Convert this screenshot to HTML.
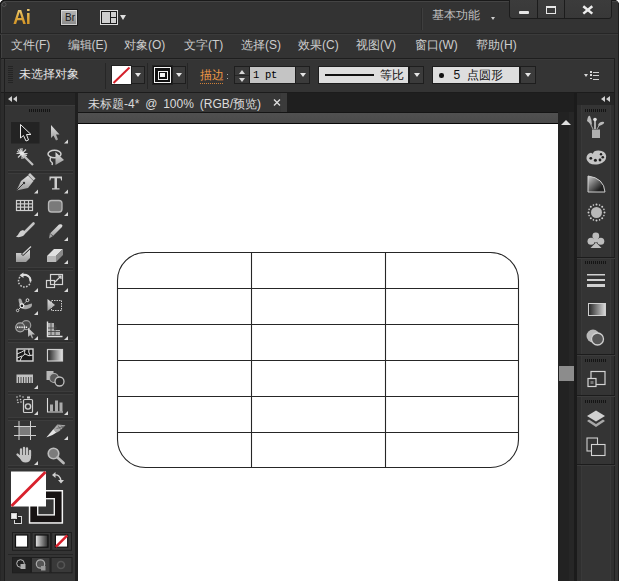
<!DOCTYPE html>
<html><head><meta charset="utf-8">
<style>
*{margin:0;padding:0;box-sizing:border-box}
html,body{width:619px;height:581px;overflow:hidden;background:#333333}
body{position:relative;font-family:"Liberation Sans",sans-serif;color:#cdcdcd}
.a{position:absolute}
.t{position:absolute;white-space:nowrap;font-size:12px;line-height:14px}
.dd{position:absolute;width:15px;height:18px;background:#3b3b3b;border:1px solid #1e1e1e}
.dd:after{content:"";position:absolute;left:calc(50% - 3px);top:6px;border-left:3px solid transparent;border-right:3px solid transparent;border-top:4px solid #e6e6e6}
.sep{position:absolute;width:1px;background:#262626}
.grip{position:absolute;height:3px;background:repeating-linear-gradient(90deg,#141414 0 1px,transparent 1px 2px)}
.tri{position:absolute;width:0;height:0;border-left:4px solid transparent;border-bottom:4px solid #d8d8d8}
</style></head><body>
<!-- ===== window frame / title bar ===== -->
<div class="a" style="left:0;top:0;width:619px;height:1px;background:#1a1a1a"></div><div class="a" style="left:0;top:1px;width:619px;height:1px;background:#444"></div><div class="a" style="left:0;top:0;width:1px;height:581px;background:#1e1e1e"></div><div class="a" style="left:1px;top:1px;width:1px;height:57px;background:#424242"></div><svg class="a" style="left:0;top:0" width="10" height="10"><path d="M0 0H3.2Q0.8 0.8 0 3.2Z" fill="#fff"/><path d="M0.5 4Q1 1 4 0.5" fill="none" stroke="#111" stroke-width="1.2"/><circle cx="4" cy="4.5" r="2" fill="none" stroke="#555" stroke-width="0.9"/></svg>
<div class="a" style="left:0;top:33px;width:619px;height:1px;background:#262626"></div><div class="a" style="left:0;top:34px;width:619px;height:1px;background:#3b3b3b"></div>

<!-- Ai logo -->
<div class="t" style="left:12.5px;top:6.5px;font-size:20.5px;line-height:20px;font-weight:bold;transform:scaleX(0.9);transform-origin:0 0;color:#e3b23e;background:linear-gradient(#f0d488 0,#e6b850 35%,#d69a2c 75%,#cc8e24 100%);-webkit-background-clip:text;background-clip:text;-webkit-text-fill-color:transparent;letter-spacing:-0.5px">Ai</div>
<!-- Br -->
<div class="a" style="left:61px;top:10px;width:16px;height:15px;border:1px solid #cfcfcf;border-top-color:#e0e0e0;background:linear-gradient(#b4b4b4,#8c8c8c);box-shadow:0 0 0 1px #1e1e1e"></div>
<div class="t" style="left:65px;top:13px;font-size:10px;line-height:10px;color:#1a1a1a">Br</div>
<!-- arrange icon -->
<div class="a" style="left:100px;top:10px;width:18px;height:15px;border:1px solid #dcdcdc;background:#1a1a1a"></div>
<div class="a" style="left:102px;top:12px;width:8px;height:11px;background:#cfcfcf"></div>
<div class="a" style="left:111px;top:12px;width:5px;height:5px;background:#cfcfcf"></div>
<div class="a" style="left:111px;top:18px;width:5px;height:5px;background:#cfcfcf"></div>
<div class="a" style="left:120px;top:15px;border-left:3.5px solid transparent;border-right:3.5px solid transparent;border-top:5px solid #e0e0e0"></div>
<!-- workspace -->
<div class="a" style="left:421px;top:8px;width:1px;height:22px;background:#2a2a2a"></div>
<div class="a" style="left:422px;top:8px;width:1px;height:22px;background:#3e3e3e"></div>
<div class="t" style="left:432px;top:8px;font-size:12px;color:#c0c0c0">基本功能</div>
<div class="a" style="left:491px;top:17px;border-left:2.5px solid transparent;border-right:2.5px solid transparent;border-top:3px solid #cfcfcf"></div>
<!-- window buttons -->
<div class="a" style="left:508.5px;top:-2px;width:103px;height:20.5px;border:1px solid #1c1c1c;border-radius:0 0 3px 3px;background:linear-gradient(#3c3c3c,#383838)"></div>
<div class="a" style="left:537px;top:0;width:1px;height:18px;background:#1c1c1c"></div>
<div class="a" style="left:564px;top:0;width:1px;height:18px;background:#1c1c1c"></div>
<div class="a" style="left:519px;top:11px;width:10px;height:2.6px;border-radius:1px;background:#e6e6e6"></div>
<div class="a" style="left:546px;top:6.3px;width:10px;height:7.5px;border:1.8px solid #e6e6e6;border-top-width:2.3px"></div>
<svg class="a" style="left:582px;top:5px" width="12" height="10"><path d="M1.3 1.2L10.3 8.6M10.3 1.2L1.3 8.6" stroke="#ececec" stroke-width="2.5"/></svg>

<div class="a" style="left:618px;top:0;width:1px;height:581px;background:#1e1e1e"></div>
<svg class="a" style="left:614px;top:0" width="5" height="5"><path d="M5 0H1.8Q4.2 0.8 5 3.2Z" fill="#fff"/></svg>
<!-- ===== menu bar ===== -->
<div class="t" style="left:11px;top:38px">文件(F)</div>
<div class="t" style="left:67.5px;top:38px">编辑(E)</div>
<div class="t" style="left:124px;top:38px">对象(O)</div>
<div class="t" style="left:184px;top:38px">文字(T)</div>
<div class="t" style="left:241px;top:38px">选择(S)</div>
<div class="t" style="left:298px;top:38px">效果(C)</div>
<div class="t" style="left:356px;top:38px">视图(V)</div>
<div class="t" style="left:414.5px;top:38px">窗口(W)</div>
<div class="t" style="left:476px;top:38px">帮助(H)</div>

<!-- ===== control bar ===== -->
<div class="a" style="left:2px;top:58px;width:612px;height:34px;background:#343434"></div><div class="a" style="left:0;top:57.5px;width:619px;height:1.5px;background:#1e1e1e"></div><div class="a" style="left:2px;top:59px;width:612px;height:1px;background:#3a3a3a"></div>
<div class="a" style="left:0;top:92px;width:619px;height:1px;background:#1c1c1c"></div>
<div class="a" style="left:8px;top:66px;width:5px;height:17px;background:repeating-linear-gradient(180deg,#242424 0 1px,transparent 1px 2px)"></div>
<div class="t" style="left:19px;top:67px;color:#e4e4e4">未选择对象</div>
<div class="sep" style="left:105px;top:63px;height:26px"></div>
<div class="a" style="left:112px;top:66px;width:19px;height:18px;background:#fff;box-shadow:0 0 0 1px #222"></div>
<svg class="a" style="left:112px;top:66px" width="19" height="18"><path d="M1.5 17L17.5 1.5" stroke="#d4202a" stroke-width="2"/></svg>
<div class="dd" style="left:131px;top:66px;width:14px"></div>
<div class="sep" style="left:147px;top:63px;height:26px"></div>
<div class="a" style="left:153px;top:66px;width:19px;height:18px;background:#111;box-shadow:0 0 0 1px #222"></div>
<div class="a" style="left:154px;top:67px;width:17px;height:16px;border:1.5px solid #f4f4f4"></div>
<div class="a" style="left:157.5px;top:70.5px;width:10px;height:9px;border:1.5px solid #f4f4f4"></div>
<div class="a" style="left:160px;top:73px;width:5px;height:4px;background:#f4f4f4"></div>
<div class="dd" style="left:172px;top:66px;width:14px"></div>
<div class="sep" style="left:187px;top:63px;height:26px"></div>
<div class="t" style="left:200px;top:67.5px;color:#f29a46">描边</div>
<div class="a" style="left:200px;top:82.5px;width:24px;height:1px;background:repeating-linear-gradient(90deg,#d08038 0 1px,transparent 1px 2px)"></div>
<div class="a" style="left:227px;top:74px;width:1px;height:1px;background:#aaa;box-shadow:0 4px 0 #aaa"></div>
<div class="a" style="left:234px;top:66px;width:16px;height:18px;background:#3a3a3a;border:1px solid #1e1e1e"></div>
<div class="a" style="left:235px;top:75px;width:14px;height:1px;background:#252525"></div>
<div class="a" style="left:238.5px;top:70px;border-left:3.5px solid transparent;border-right:3.5px solid transparent;border-bottom:4px solid #d8d8d8"></div>
<div class="a" style="left:238.5px;top:78px;border-left:3.5px solid transparent;border-right:3.5px solid transparent;border-top:4px solid #d8d8d8"></div>
<div class="a" style="left:249px;top:66px;width:47px;height:18px;background:#c4c4c4;border:1px solid #1e1e1e"></div>
<div class="t" style="left:253px;top:69px;font-family:'Liberation Mono',monospace;font-size:10.5px;line-height:12px;font-weight:normal;color:#000;letter-spacing:-0.3px">1 pt</div>
<div class="dd" style="left:295px;top:66px;width:15px"></div>
<div class="a" style="left:318px;top:66px;width:91px;height:18px;background:#dedede;border:1px solid #1e1e1e"></div>
<div class="a" style="left:325px;top:74px;width:49px;height:2px;background:#111"></div>
<div class="t" style="left:379.5px;top:68px;color:#111">等比</div>
<div class="dd" style="left:409px;top:66px;width:15px"></div>
<div class="a" style="left:432px;top:66px;width:88px;height:18px;background:#dedede;border:1px solid #1e1e1e"></div>
<div class="a" style="left:439px;top:73px;width:4.5px;height:4.5px;border-radius:50%;background:#111"></div>
<div class="t" style="left:453.5px;top:68px;color:#111;word-spacing:3px">5 点圆形</div>
<div class="dd" style="left:520px;top:66px;width:16px"></div>
<!-- panel menu icon -->
<div class="a" style="left:584px;top:73.5px;border-left:2.5px solid transparent;border-right:2.5px solid transparent;border-top:3px solid #d8d8d8"></div>
<div class="a" style="left:590px;top:71px;width:1.5px;height:9px;background:repeating-linear-gradient(180deg,#d8d8d8 0 1.5px,transparent 1.5px 3.3px)"></div>
<div class="a" style="left:592.5px;top:71.5px;width:6px;height:8px;background:repeating-linear-gradient(180deg,#cfcfcf 0 1px,transparent 1px 3.3px)"></div>
<!-- ===== left frame ===== -->
<div class="a" style="left:0;top:58px;width:1px;height:523px;background:#262626"></div>
<div class="a" style="left:1px;top:93px;width:3px;height:488px;background:#2c2c2c"></div><div class="a" style="left:4px;top:58px;width:1px;height:523px;background:#1e1e1e"></div>
<!-- ===== left toolbar ===== -->
<div class="a" style="left:5px;top:93px;width:70px;height:488px;background:#343434"></div>
<div class="a" style="left:5px;top:93px;width:70px;height:12px;background:#262626"></div>
<div class="a" style="left:5px;top:105px;width:70px;height:1px;background:#3c3c3c"></div>
<svg class="a" style="left:8px;top:96px" width="10" height="6"><path d="M4 0L0 3L4 6ZM9 0L5 3L9 6Z" fill="#cfcfcf"/></svg>
<div class="grip" style="left:29px;top:109px;width:21px"></div>
<div class="a" style="left:75px;top:93px;width:3px;height:488px;background:#1f1f1f"></div>

<!-- ===== document tab bar ===== -->
<div class="a" style="left:78px;top:93px;width:498px;height:19px;background:#1f1f1f"></div>
<div class="a" style="left:78px;top:93px;width:209px;height:19px;background:#373737"></div><div class="a" style="left:281px;top:93px;width:6px;height:19px;background:#3b3b3b"></div>
<div class="t" style="left:88px;top:97px;color:#dcdcdc;word-spacing:2.5px">未标题-4* @ 100% (RGB/预览)</div>
<svg class="a" style="left:273px;top:99px" width="8" height="7"><path d="M1 0.5L7 6.5M7 0.5L1 6.5" stroke="#dcdcdc" stroke-width="1.4"/></svg>
<div class="a" style="left:78px;top:112px;width:480px;height:11px;background:linear-gradient(#151515 0,#151515 1px,#505050 1px,#4a4a4a 100%)"></div>
<div class="a" style="left:78px;top:123px;width:480px;height:1px;background:#080808"></div>
<div class="a" style="left:78px;top:124px;width:480px;height:457px;background:#ffffff"></div>
<!-- scrollbar -->
<div class="a" style="left:558px;top:112px;width:18px;height:469px;background:#222"></div>
<div class="a" style="left:569px;top:112px;width:5px;height:469px;background:#262626"></div>
<div class="a" style="left:574px;top:93px;width:3px;height:488px;background:#1b1b1b"></div>
<div class="a" style="left:561px;top:119.5px;border-left:5.2px solid transparent;border-right:5.2px solid transparent;border-bottom:5.5px solid #e0e0e0"></div>
<div class="a" style="left:559px;top:366px;width:15px;height:15px;background:#8c8c8c"></div>

<!-- ===== right panel ===== -->
<div class="a" style="left:577px;top:93px;width:37px;height:488px;background:#2f2f2f"></div>
<div class="a" style="left:581px;top:105px;width:30px;height:476px;background:#393939"></div>
<div class="a" style="left:582px;top:105px;width:28px;height:476px;background:#343434"></div>
<div class="a" style="left:577px;top:93px;width:37px;height:12px;background:#262626"></div>
<div class="a" style="left:614px;top:58px;width:1px;height:523px;background:#1e1e1e"></div><div class="a" style="left:615px;top:58px;width:3px;height:523px;background:#333"></div>
<svg class="a" style="left:601px;top:96px" width="10" height="6"><path d="M4 0L0 3L4 6ZM9 0L5 3L9 6Z" fill="#cfcfcf"/></svg>
<div class="grip" style="left:585px;top:109px;width:21px"></div>
<div class="grip" style="left:585px;top:261px;width:21px"></div>
<div class="grip" style="left:585px;top:359px;width:21px"></div>
<div class="grip" style="left:585px;top:400px;width:21px"></div>

<!-- ===== tools ===== -->
<svg class="a" style="left:0;top:0" width="78" height="581">
<defs>
<linearGradient id="gg" x1="0" y1="0" x2="0" y2="1"><stop offset="0" stop-color="#e0e0e0"/><stop offset="1" stop-color="#9a9a9a"/></linearGradient>
<linearGradient id="gr" x1="0" y1="0" x2="1" y2="0"><stop offset="0" stop-color="#1e1e1e"/><stop offset="1" stop-color="#e8e8e8"/></linearGradient><linearGradient id="gw" x1="0" y1="0" x2="1" y2="0"><stop offset="0" stop-color="#e8e8e8"/><stop offset="1" stop-color="#2a2a2a"/></linearGradient>
</defs>
<!-- separators -->
<g fill="#3c3c3c">
<rect x="8" y="170" width="65" height="1"/><rect x="8" y="267" width="65" height="1"/>
<rect x="8" y="339" width="65" height="1"/><rect x="8" y="391" width="65" height="1"/>
<rect x="8" y="417" width="65" height="1"/><rect x="8" y="465" width="65" height="1"/>
<rect x="8" y="173" width="65" height="1"/><rect x="8" y="270" width="65" height="1"/>
<rect x="8" y="342" width="65" height="1"/><rect x="8" y="394" width="65" height="1"/>
<rect x="8" y="420" width="65" height="1"/><rect x="8" y="468" width="65" height="1"/>
</g>
<g fill="#262626">
<rect x="8" y="171.5" width="65" height="1"/><rect x="8" y="268.5" width="65" height="1"/>
<rect x="8" y="340.5" width="65" height="1"/><rect x="8" y="392.5" width="65" height="1"/>
<rect x="8" y="418.5" width="65" height="1"/><rect x="8" y="466.5" width="65" height="1"/>
<rect x="8" y="554" width="65" height="1"/>
</g>
<!-- corner triangles -->
<g fill="#d8d8d8">
<path d="M68 139.5V143.5H64Z"/>
<path d="M38 189.5V193.5H34Z"/><path d="M68 189.5V193.5H64Z"/>
<path d="M38 212V216H34Z"/><path d="M68 212V216H64Z"/>
<path d="M68 237V241H64Z"/>
<path d="M68 260V264H64Z"/>
<path d="M38 288V292H34Z"/><path d="M68 288V292H64Z"/>
<path d="M38 311V315H34Z"/>
<path d="M38 336V340H34Z"/><path d="M68 336V340H64Z"/>
<path d="M38 385V389H34Z"/>
<path d="M38 411V415H34Z"/><path d="M68 411V415H64Z"/>
<path d="M68 436V440H64Z"/>
<path d="M38 461V465H34Z"/>
</g>
<!-- row1: selection -->
<rect x="11" y="122" width="28.5" height="21.5" fill="#232323"/>
<path d="M20.5 124.5V138L23.5 135.5L26 141L28.5 140L26.5 134.5H31Z" fill="#1a1a1a" stroke="#e8e8e8" stroke-width="1"/>
<path d="M51 125V138L53.5 135.5L56 140.5L58 139.5L56 134.5H59.5Z" fill="url(#gg)"/>
<!-- row2: magic wand / lasso -->
<g stroke="#d0d0d0" stroke-width="1.1">
<path d="M22 148V159M16.5 153.5H27.5M18 149.5L26 157.5M26 149.5L18 157.5M20 148.5L24 158.5M17 151.5L27 155.5"/>
</g><circle cx="22" cy="153.5" r="2" fill="#e8e8e8"/>
<path d="M24 156L33 165" stroke="#c0c0c0" stroke-width="2.2"/>
<ellipse cx="54.5" cy="154" rx="6.5" ry="3.8" fill="none" stroke="#cfcfcf" stroke-width="1.5"/>
<path d="M51 157Q49 160 51.5 162Q53 163 52 165" fill="none" stroke="#cfcfcf" stroke-width="1.4"/>
<path d="M55.5 152V165L64 160Z" fill="url(#gg)"/>
<!-- row3: pen / type -->
<path d="M16.5 190.5L21 181L28 175.5L33.5 181L28 188Z" fill="url(#gg)"/>
<path d="M28 175L30 173L35.5 178.5L33.5 180.5Z" fill="#c8c8c8"/>
<path d="M16.5 190.5L23.5 183.5" stroke="#333" stroke-width="1"/>
<circle cx="24" cy="183" r="1.2" fill="#333"/>
<path d="M49.5 176.5H62V180.5H61.2L60.5 178.3H57V188.3H59.5V189.5H52V188.3H54.5V178.3H51L50.3 180.5H49.5Z" fill="#cdcdcd"/>
<!-- row4: grid / rounded rect -->
<g fill="none" stroke="#d0d0d0" stroke-width="1.2">
<rect x="16.5" y="200.5" width="16" height="10"/>
<path d="M16.5 203.8H32.5M16.5 207.2H32.5M20.5 200.5V210.5M24.5 200.5V210.5M28.5 200.5V210.5"/>
</g>
<rect x="48.5" y="200.5" width="13.5" height="11.5" rx="3" fill="#7a7a7a" stroke="#b8b8b8" stroke-width="1.3"/>
<!-- row5: brush / pencil -->
<path d="M24.5 232.5L33.5 223.5" stroke="#c4c4c4" stroke-width="2.6" stroke-linecap="round"/>
<path d="M16 236.8Q19.5 237.8 23 236Q25.8 234 25 231.5L23 230Q20 230.5 19 233Q18 235.5 16 236.8Z" fill="#cfcfcf"/>
<path d="M49 238.5L50 233.5L59 224.5Q61.5 223.5 62.5 225.5L62 227L53 236Z" fill="url(#gg)"/>
<path d="M50 233.5L53 236" stroke="#444" stroke-width="0.8"/>
<!-- row6: blob brush / eraser -->
<path d="M16 253H26L30 249V258L26 262H16Z" fill="url(#gg)"/>
<path d="M22 255L31 246.5" stroke="#2a2a2a" stroke-width="3"/>
<path d="M22.5 254.5L31 246.5" stroke="#cfcfcf" stroke-width="1.5"/>
<path d="M47 256L54 249H63L56 256Z" fill="#e0e0e0"/>
<path d="M47 256H56V262H47Z" fill="#b8b8b8"/><path d="M56 256L63 249V255L56 262Z" fill="#8a8a8a"/>
<!-- row7: rotate / scale -->
<circle cx="24.5" cy="281" r="6" fill="none" stroke="#c8c8c8" stroke-width="1.5" stroke-dasharray="1.6 1.4"/>
<path d="M22 275.3A6 6 0 0 1 30.5 281" fill="none" stroke="#dcdcdc" stroke-width="2"/>
<path d="M23.5 272.5V278L19.5 275.3Z" fill="#dcdcdc"/>
<g fill="none" stroke="#d4d4d4" stroke-width="1.2">
<rect x="50.5" y="274.5" width="12" height="10"/>
<rect x="46.5" y="280.5" width="8" height="7"/>
<path d="M55 282L61 276M58 276H61V279"/>
</g>
<!-- row8: width / free transform -->
<path d="M18.5 299Q21 297.5 22 301Q23 306 27 305Q30 303.5 32 303.5Q32.5 308 27 309Q21.5 310 20 306Q18.5 302 18.5 299Z" fill="#a8a8a8"/>
<path d="M17.6 310.5L27.5 300.2" stroke="#e8e8e8" stroke-width="1" stroke-dasharray="1.2 0.8"/>
<circle cx="21.9" cy="305.8" r="1.9" fill="#222" stroke="#f0f0f0" stroke-width="1.1"/>
<circle cx="27.5" cy="300.2" r="1.4" fill="#222" stroke="#e8e8e8" stroke-width="1"/>
<circle cx="17.6" cy="310.5" r="1.2" fill="#222" stroke="#e0e0e0" stroke-width="0.9"/>
<rect x="51.5" y="300.5" width="10" height="10" fill="none" stroke="#cfcfcf" stroke-width="1" stroke-dasharray="1.5 1"/>
<path d="M47.5 299V311L55 305Z" fill="url(#gg)"/>
<!-- row9: shape builder / perspective -->
<circle cx="26.2" cy="325.2" r="4.5" fill="#4a4a4a" stroke="#999" stroke-width="1.2"/>
<circle cx="20.2" cy="327.3" r="4.5" fill="#555" stroke="#aaa" stroke-width="1.2"/>
<path d="M17 327.3H28" stroke="#f4f4f4" stroke-width="1.4" stroke-dasharray="1.3 0.9"/>
<path d="M28 327.8V337L30.3 335L32 338.5L33.3 338L31.8 334.5H35Z" fill="url(#gg)"/>
<path d="M47.5 321.5V336.5H62.5" fill="none" stroke="#e0e0e0" stroke-width="1.4"/>
<path d="M48 323H54V330H60V335H48Z" fill="#b0b0b0"/>
<path d="M51 322V335M55 325V335M48 328H57M48 331.5H61" stroke="#4a4a4a" stroke-width="0.9"/>
<!-- row10: mesh / gradient -->
<rect x="17" y="349" width="16" height="12" fill="#1a1a1a" stroke="#d8d8d8" stroke-width="1.4"/>
<path d="M17 354Q22 352 25 350M20 361Q21 356 25 354Q29 357 33 355M25 350Q24 353 25 354M22 356L17 358M29 349Q28 352 30 355" fill="none" stroke="#e0e0e0" stroke-width="1"/>
<rect x="47.5" y="349.5" width="15" height="11.5" fill="url(#gr)" stroke="#cfcfcf" stroke-width="1.2"/>
<!-- row11: ruler / blend -->
<path d="M16.5 374.5H33V383H16.5Z" fill="#c0c0c0"/>
<path d="M18.5 377V383M21 377V383M23.5 377V383M26 377V383M28.5 377V383M31 377V383" stroke="#444" stroke-width="0.9"/>
<rect x="46.5" y="371" width="7" height="9" fill="#b8b8b8"/>
<circle cx="54" cy="378" r="4.5" fill="#5a5a5a" stroke="#b0b0b0" stroke-width="1.2"/>
<circle cx="59.5" cy="381.5" r="4.5" fill="#2c2c2c" stroke="#c0c0c0" stroke-width="1.3"/>
<!-- row12: symbol sprayer / graph -->
<g fill="#cfcfcf"><circle cx="17" cy="397" r=".8"/><circle cx="20" cy="396" r=".8"/><circle cx="23" cy="397" r=".8"/><circle cx="17.5" cy="400" r=".8"/><circle cx="20.5" cy="399.5" r=".8"/><circle cx="18" cy="402.5" r=".8"/><circle cx="21" cy="402" r=".8"/></g>
<rect x="27" y="396.5" width="3" height="2" fill="#cfcfcf"/>
<rect x="23.5" y="399.5" width="9" height="13" rx="1" fill="#333" stroke="#cfcfcf" stroke-width="1.2"/>
<circle cx="28" cy="406.5" r="2.6" fill="none" stroke="#d0d0d0" stroke-width="1.4"/>
<path d="M47.5 398V412H63" fill="none" stroke="#dcdcdc" stroke-width="1.1"/>
<rect x="50" y="404.5" width="3" height="7" fill="#aaa"/><rect x="55" y="400.5" width="3" height="11" fill="#aaa"/><rect x="59.5" y="402.5" width="3" height="9" fill="#aaa"/>
<!-- row13: artboard / slice -->
<rect x="19" y="426.5" width="11.5" height="9" fill="#7a7a7a"/>
<path d="M14 426.5H36M14 435.5H36M19 421V440M30.5 421V440" stroke="#d0d0d0" stroke-width="1"/>
<path d="M46.3 437.5L53.5 429L56.5 432.5L52.5 435Z" fill="#e4e4e4"/>
<path d="M53.3 429.2L57.3 424.5L65.5 425.3L59.5 431L56.5 432.7Z" fill="#a8a8a8"/>
<path d="M58 425.5L61 430M61 425.5L63 428M56.5 428.5L64 426.5" stroke="#555" stroke-width="0.7"/>
<!-- row14: hand / zoom -->
<g stroke="#c4c4c4" stroke-width="2.3" stroke-linecap="round"><path d="M21 456V449.5M24 455V448M27 455V448.5M30 456V451M17.5 454.5L21 458"/></g>
<path d="M20 455H31V458Q30 462.5 25.5 462.5Q21.5 462.5 20 458Z" fill="#c4c4c4"/>
<circle cx="53.5" cy="453.5" r="5.3" fill="#7c7c7c" stroke="#bdbdbd" stroke-width="1.6"/>
<path d="M57.5 457.5L63.5 463" stroke="#b8b8b8" stroke-width="2.8" stroke-linecap="round"/>
<!-- fill / stroke -->
<rect x="28.8" y="490" width="34.3" height="33.7" fill="#f4f4f4"/>
<rect x="30.3" y="491.5" width="31.3" height="30.7" fill="#171313"/>
<rect x="37" y="498" width="18" height="17.6" fill="#f0f0f0"/>
<rect x="38.4" y="499.4" width="15.2" height="14.8" fill="#363636"/>
<rect x="11" y="471.5" width="35" height="35" fill="#ffffff"/>
<path d="M11.5 506L45.5 472" stroke="#d8202c" stroke-width="2.8"/>
<path d="M54 475Q60 474 61 481" fill="none" stroke="#d0d0d0" stroke-width="1.4"/>
<path d="M55.5 472V478L52 475Z M58 480H64L61 483.5Z" fill="#d0d0d0"/>
<rect x="14.5" y="516.5" width="7" height="7" fill="#222" stroke="#d8d8d8" stroke-width="1"/>
<rect x="10.5" y="512.5" width="7" height="7" fill="#e8e8e8" stroke="#222" stroke-width="1"/>
<rect x="11.5" y="513.5" width="5" height="5" fill="#f0f0f0" stroke="#bbb" stroke-width=".6"/>
<!-- color buttons -->
<g fill="#393939" stroke="#1e1e1e" stroke-width="1"><rect x="12.5" y="532.5" width="18.4" height="17.8"/><rect x="32" y="532.5" width="18.6" height="17.8"/><rect x="51.7" y="532.5" width="19.7" height="17.8"/></g>
<rect x="15.5" y="535" width="12.2" height="12.2" fill="#fff" stroke="#111" stroke-width="1.2"/>
<rect x="35.2" y="535" width="12.8" height="12.2" fill="url(#gw)" stroke="#111" stroke-width="1.2"/>
<rect x="55.4" y="535" width="12.3" height="12.2" fill="#fff" stroke="#111" stroke-width="1.2"/>
<path d="M55.8 546.8L67.3 535.4" stroke="#d8202c" stroke-width="2.5"/>
<!-- draw modes -->
<g stroke="#1e1e1e" stroke-width="1">
<rect x="12.5" y="557.5" width="18" height="15.3" fill="#232323"/>
<rect x="31.5" y="557.5" width="18.5" height="15.3" fill="#3c3c3c"/>
<rect x="51" y="557.5" width="21" height="15.3" fill="#393939"/>
</g>
<circle cx="20.5" cy="563.5" r="3.8" fill="none" stroke="#bbb" stroke-width="1"/><rect x="20.5" y="564" width="5" height="5" fill="#b0b0b0"/>
<circle cx="40.5" cy="564" r="4.2" fill="#555" stroke="#aaa" stroke-width="1.2"/><rect x="41" y="566" width="4.5" height="4.5" fill="#999"/>
<circle cx="61" cy="565" r="3.5" fill="none" stroke="#555" stroke-width="1.6"/>
</svg>

<!-- ===== right panel icons ===== -->
<svg class="a" style="left:576px;top:93px" width="43" height="488">
<defs>
<linearGradient id="rg" x1="0" y1="0" x2="1" y2="0"><stop offset="0" stop-color="#252525"/><stop offset="1" stop-color="#dcdcdc"/></linearGradient>
<linearGradient id="rg2" x1="0" y1="0" x2="1" y2="1"><stop offset="0" stop-color="#d0d0d0"/><stop offset="0.75" stop-color="#202020"/></linearGradient>
</defs>
<!-- group separators (y offsets relative to 93) -->
<g fill="#1c1c1c"><rect x="1" y="164" width="38" height="1"/><rect x="1" y="261" width="38" height="1"/><rect x="1" y="302" width="38" height="1"/><rect x="1" y="371" width="38" height="1"/></g>
<g fill="#3c3c3c"><rect x="1" y="165" width="38" height="1"/><rect x="1" y="262" width="38" height="1"/><rect x="1" y="303" width="38" height="1"/><rect x="1" y="372" width="38" height="1"/></g>
<!-- brushes (y 117-138) -->
<path d="M13 28L17 36" stroke="#aaa" stroke-width="1"/>
<path d="M11 28Q12 22 14 23Q16 27 16 32Z" fill="#b8b8b8"/>
<path d="M19 26V36" stroke="#ddd" stroke-width="1.4"/><circle cx="19" cy="26.5" r="1.8" fill="#e0e0e0"/>
<path d="M21 36L24 31" stroke="#aaa" stroke-width="1"/>
<path d="M22 32Q24 28 28 29Q29 31 23 33Z" fill="#b8b8b8"/>
<rect x="16" y="36.5" width="8" height="8.5" fill="#b0b0b0"/>
<!-- palette (y 150-165) -->
<path d="M10.5 66Q10 61 15 59.8L16.8 60.8Q17.5 57.3 22.5 57.4Q29.5 57.8 30.2 63Q30.5 69.5 22.5 71.3Q12.5 72.8 10.5 66Z" fill="#c4c4c4"/>
<g fill="#1e1e1e"><circle cx="14.8" cy="65.3" r="1.4"/><circle cx="19.4" cy="67.2" r="1.5"/><circle cx="24" cy="67" r="1.4"/><circle cx="26.8" cy="64.2" r="1.3"/><circle cx="25" cy="61.3" r="1.2"/></g>
<!-- color guide quarter (y 176-192) -->
<path d="M12 83V99H29Q28 85 12 83Z" fill="url(#rg2)" stroke="#cfcfcf" stroke-width="1"/>
<!-- swatches sun (y 204-222) -->
<circle cx="20.5" cy="119.5" r="5.5" fill="#b8b8b8"/>
<g fill="#cfcfcf"><circle cx="20.5" cy="111.5" r="1"/><circle cx="26.2" cy="113.8" r="1"/><circle cx="28.5" cy="119.5" r="1"/><circle cx="26.2" cy="125.2" r="1"/><circle cx="20.5" cy="127.5" r="1"/><circle cx="14.8" cy="125.2" r="1"/><circle cx="12.5" cy="119.5" r="1"/><circle cx="14.8" cy="113.8" r="1"/><circle cx="23.6" cy="112.1" r=".8"/><circle cx="27.9" cy="116.4" r=".8"/><circle cx="27.9" cy="122.6" r=".8"/><circle cx="23.6" cy="126.9" r=".8"/><circle cx="17.4" cy="126.9" r=".8"/><circle cx="13.1" cy="122.6" r=".8"/><circle cx="13.1" cy="116.4" r=".8"/><circle cx="17.4" cy="112.1" r=".8"/></g>
<!-- club (y 233-248) -->
<g fill="#bdbdbd"><circle cx="19.8" cy="143" r="3.4"/><circle cx="15" cy="148.2" r="3.5"/><circle cx="24.8" cy="148.2" r="3.5"/><circle cx="19.8" cy="147" r="2.5"/><path d="M14.5 155H25.5L20 149.5Z"/></g>
<!-- stroke lines (y 274-287) -->
<g fill="#d0d0d0"><rect x="11" y="181" width="18" height="1.5"/><rect x="11" y="186" width="18" height="2"/><rect x="11" y="191" width="18" height="3"/></g>
<!-- gradient (y 303-315) -->
<rect x="12.5" y="210.5" width="17" height="12" fill="url(#rg)" stroke="#cfcfcf" stroke-width="1"/>
<!-- transparency (y 329-346) -->
<circle cx="17" cy="243" r="6.5" fill="#b8b8b8"/>
<circle cx="21.5" cy="246" r="6" fill="#555" stroke="#d0d0d0" stroke-width="1.3"/>
<!-- artboards (y 371-387) -->
<rect x="15" y="278.5" width="14" height="13" fill="none" stroke="#d4d4d4" stroke-width="1.2"/>
<rect x="12" y="285.5" width="8" height="8" fill="#333" stroke="#d4d4d4" stroke-width="1.2"/>
<rect x="14.5" y="288" width="3" height="3" fill="#777"/>
<!-- layers (y 410-427) -->
<path d="M20 317.5L29 323L20 328.5L11 323Z" fill="#d0d0d0"/>
<path d="M13 326.5L20 331L27 326.5L29 328L20 334L11 328Z" fill="#a8a8a8"/>
<!-- artboards 2 (y 437-455) -->
<rect x="11" y="345" width="10.5" height="13" fill="none" stroke="#cfcfcf" stroke-width="1.1"/>
<rect x="15.5" y="351.5" width="13.5" height="11" fill="#343434" stroke="#d4d4d4" stroke-width="1.1"/>
</svg>

<!-- table -->
<svg class="a" style="left:0;top:0" width="619" height="581">
<g fill="none" stroke="#262626" stroke-width="1.1">
<rect x="117.5" y="252.5" width="401" height="215" rx="28" ry="28"/>
<path d="M251.5 252.5V467.5M385.5 252.5V467.5M117.5 288.5H518.5M117.5 324.5H518.5M117.5 360.5H518.5M117.5 396.5H518.5M117.5 432.5H518.5"/>
</g>
</svg>
</body></html>
